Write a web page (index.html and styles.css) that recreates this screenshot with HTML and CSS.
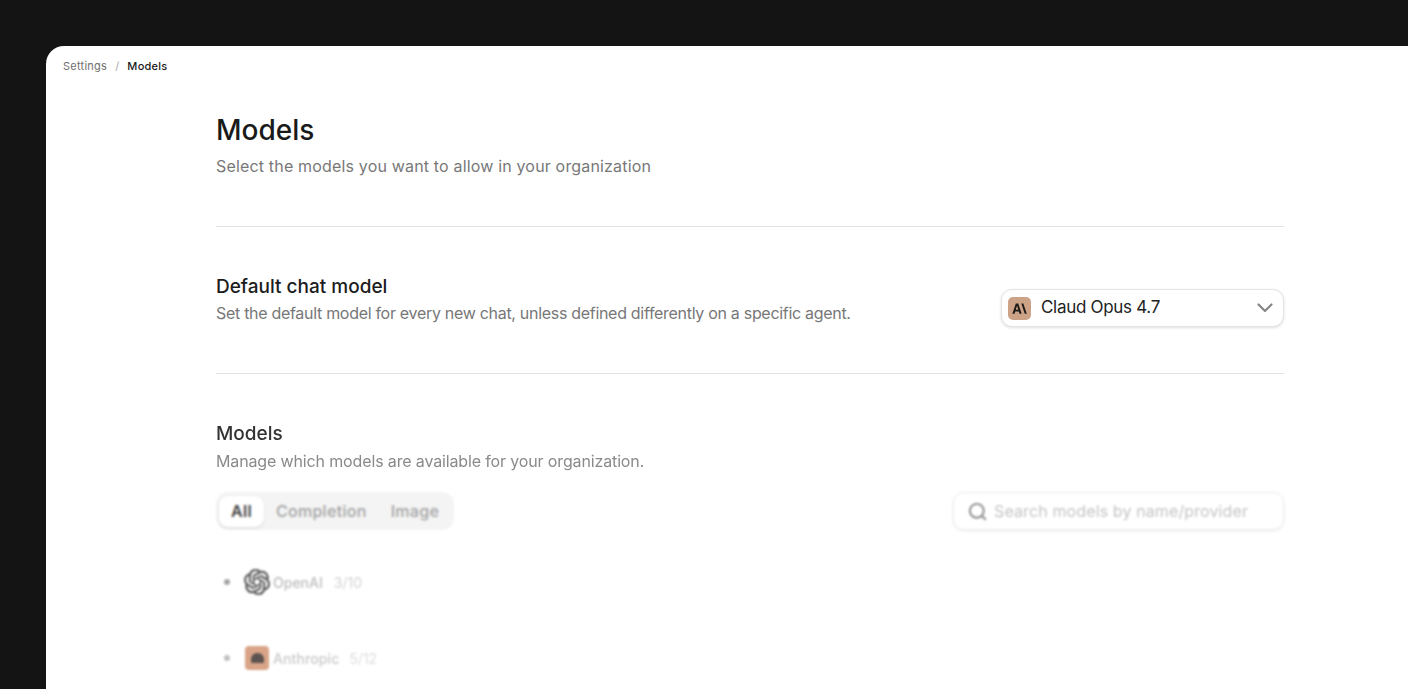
FILE: index.html
```html
<!DOCTYPE html>
<html lang="en">
<head>
<meta charset="utf-8">
<title>Models</title>
<link rel="stylesheet" href="styles.css">
</head>
<body>
<main class="panel">
  <nav class="crumbs"><span class="crumb">Settings</span><span class="sep">/</span><span class="crumb-current">Models</span></nav>
  <div class="content">
    <header class="page-head">
      <h1 class="page-title">Models</h1>
      <p class="page-sub">Select the models you want to allow in your organization</p>
    </header>
    <section class="default-row">
      <div class="default-text">
        <h2 class="section-title">Default chat model</h2>
        <p class="section-sub">Set the default model for every new chat, unless defined differently on a specific agent.</p>
      </div>
      <div class="select">
        <span class="logo-tile"><svg class="logo-a" viewBox="0 0 16 12"><path d="M0.2 11.6 4 0.6H6.6L10.4 11.6H8L7.3 9.3H3.3L2.6 11.6ZM3.9 7.4H6.7L5.3 3Z" fill="#1c1a18"/><path d="M10 0.6H12.2L15.9 11.6H13.7Z" fill="#1c1a18"/></svg></span>
        <span class="select-label">Claud Opus 4.7</span>
        <svg class="chev" viewBox="0 0 16 10"><path d="M1.5 1.5 8 8l6.5-6.5" fill="none" stroke="#868686" stroke-width="2.2" stroke-linecap="round" stroke-linejoin="round"/></svg>
      </div>
    </section>
    <section class="models">
      <div class="models-head">
        <h2 class="section-title models-title">Models</h2>
        <p class="section-sub models-sub">Manage which models are available for your organization.</p>
      </div>
      <div class="toolbar">
        <div class="tabs">
          <span class="tab tab-on">All</span>
          <span class="tab">Completion</span>
          <span class="tab">Image</span>
        </div>
        <div class="search">
          <svg class="search-ico" viewBox="0 0 20 20"><circle cx="9.3" cy="9.3" r="7.3" fill="none" stroke="#8a8a8a" stroke-width="2"/><path d="m14.6 14.6 3.6 3.6" stroke="#8a8a8a" stroke-width="2" stroke-linecap="round"/></svg>
          <span class="search-ph">Search models by name/provider</span>
        </div>
      </div>
      <ul class="providers">
        <li class="provider">
          <span class="caret"></span>
          <svg class="p-logo" viewBox="0 0 24 24"><path fill="#555" stroke="#666" stroke-width="0.5" d="M22.2819 9.8211a5.9847 5.9847 0 0 0-.5157-4.9108 6.0462 6.0462 0 0 0-6.5098-2.9A6.0651 6.0651 0 0 0 4.9807 4.1818a5.9847 5.9847 0 0 0-3.9977 2.9 6.0462 6.0462 0 0 0 .7427 7.0966 5.98 5.98 0 0 0 .511 4.9107 6.051 6.051 0 0 0 6.5146 2.9001A5.9847 5.9847 0 0 0 13.2599 24a6.0557 6.0557 0 0 0 5.7718-4.2058 5.9894 5.9894 0 0 0 3.9977-2.9001 6.0557 6.0557 0 0 0-.7475-7.0729zm-9.022 12.6081a4.4755 4.4755 0 0 1-2.8764-1.0408l.1419-.0804 4.7783-2.7582a.7948.7948 0 0 0 .3927-.6813v-6.7369l2.02 1.1686a.071.071 0 0 1 .038.052v5.5826a4.504 4.504 0 0 1-4.4945 4.4944zm-9.6607-4.1254a4.4708 4.4708 0 0 1-.5346-3.0137l.142.0852 4.783 2.7582a.7712.7712 0 0 0 .7806 0l5.8428-3.3685v2.3324a.0804.0804 0 0 1-.0332.0615L9.74 19.9502a4.4992 4.4992 0 0 1-6.1408-1.6464zM2.3408 7.8956a4.485 4.485 0 0 1 2.3655-1.9728V11.6a.7664.7664 0 0 0 .3879.6765l5.8144 3.3543-2.0201 1.1685a.0757.0757 0 0 1-.071 0l-4.8303-2.7865A4.504 4.504 0 0 1 2.3408 7.872zm16.5963 3.8558L13.1038 8.364 15.1192 7.2a.0757.0757 0 0 1 .071 0l4.8303 2.7913a4.4944 4.4944 0 0 1-.6765 8.1042v-5.6772a.79.79 0 0 0-.407-.667zm2.0107-3.0231l-.142-.0852-4.7735-2.7818a.7759.7759 0 0 0-.7854 0L9.409 9.2297V6.8974a.0662.0662 0 0 1 .0284-.0615l4.8303-2.7866a4.4992 4.4992 0 0 1 6.6802 4.66zM8.3065 12.863l-2.02-1.1638a.0804.0804 0 0 1-.038-.0567V6.0742a4.4992 4.4992 0 0 1 7.3757-3.4537l-.142.0805L8.704 5.459a.7948.7948 0 0 0-.3927.6813zm1.0976-2.3654l2.602-1.4998 2.6069 1.4998v2.9994l-2.5974 1.5-2.6067-1.4997Z"/></svg>
          <span class="p-name">OpenAI</span><span class="p-count">3/10</span>
        </li>
        <li class="provider provider-faint">
          <span class="caret"></span>
          <span class="p-tile"><span class="p-tile-mark"></span></span>
          <span class="p-name">Anthropic</span><span class="p-count">5/12</span>
        </li>
      </ul>
    </section>
  </div>
</main>
</body>
</html>
```
FILE: styles.css
```css
* { box-sizing: border-box; }
html, body { margin: 0; height: 100%; overflow: hidden; }
body {
  background: #141414;
  padding: 46px 0 0 46px;
  font-family: Inter, "Liberation Sans", sans-serif;
  color: #171717;
}
.panel {
  background: #fff;
  height: 643px;
  border-top-left-radius: 18px;
  overflow: hidden;
}
.crumbs {
  display: flex;
  align-items: center;
  height: 39px;
  padding-left: 17px;
  font-size: 11px;
  letter-spacing: 0.25px;
}
.crumb { color: #6f6f6f; }
.sep { color: #a8a8a8; margin: 0 8px; }
.crumb-current { color: #1a1a1a; font-weight: 500; }
.content { width: 1068px; margin-left: 170px; }
.page-head {
  height: 142px;
  padding-top: 27px;
  border-bottom: 1px solid #e3e3e3;
}
.page-title {
  margin: 0;
  font-size: 28px;
  line-height: 36px;
  font-weight: 500;
  color: #1a1a1a;
}
.page-sub {
  margin: 8px 0 0;
  font-size: 16px;
  line-height: 20px;
  color: #787878;
  letter-spacing: 0.17px;
}
.default-row {
  display: flex;
  justify-content: space-between;
  align-items: flex-start;
  height: 147px;
  padding-top: 48px;
  border-bottom: 1px solid #e3e3e3;
}
.section-title {
  margin: 0;
  font-size: 19px;
  line-height: 24px;
  font-weight: 500;
  color: #1c1c1c;
}
.section-sub {
  margin: 4px 0 0;
  font-size: 16px;
  line-height: 20px;
  color: #777;
  letter-spacing: -0.3px;
}
.select {
  display: flex;
  align-items: center;
  width: 283px;
  height: 38px;
  margin-top: 14px;
  padding: 0 10px 0 6px;
  border-radius: 11px;
  border: 1px solid #e4e4e4;
  box-shadow: 0 1px 3px rgba(0,0,0,.13);
  background: #fff;
}
.logo-tile {
  display: flex;
  align-items: center;
  justify-content: center;
  width: 23px;
  height: 23px;
  border-radius: 5px;
  background: #cda388;
}
.logo-a { width: 15px; height: 11px; }
.select-label { margin-left: 10px; padding-bottom: 2px; font-size: 17px; color: #222; flex: 1; letter-spacing: -0.3px; }
.chev { width: 16px; height: 10px; }
.models { filter: blur(0.7px); padding-top: 48px; }
.models-title { color: #333; }
.models-sub { color: #8a8a8a; margin-top: 5px; letter-spacing: -0.14px; }
.toolbar {
  display: flex;
  justify-content: space-between;
  margin-top: 21px;
  filter: blur(0.8px);
}
.tabs {
  display: flex;
  align-items: center;
  height: 38px;
  padding: 0 3px;
  border-radius: 12px;
  background: #f4f4f4;
}
.tab { padding: 0 12px; font-size: 16px; font-weight: 500; color: #a3a3a3; letter-spacing: 0.3px; }
.tab-on {
  display: flex;
  align-items: center;
  height: 31px;
  border-radius: 9px;
  background: #fff;
  color: #444;
  font-weight: 600;
  box-shadow: 0 1px 3px rgba(0,0,0,.12);
}
.search {
  display: flex;
  align-items: center;
  width: 331px;
  height: 38px;
  padding-left: 14px;
  border-radius: 11px;
  border: 1px solid #ececec;
  box-shadow: 0 1px 3px rgba(0,0,0,.09);
}
.search-ico { width: 19px; height: 19px; }
.search-ph { margin-left: 7px; font-size: 16px; color: #c4c4c4; letter-spacing: 0.12px; }
.providers { list-style: none; margin: 0; padding: 32px 0 0 8px; filter: blur(1.2px); }
.provider { display: flex; align-items: center; height: 40px; margin-bottom: 36px; }
.caret { width: 6px; height: 6px; border-radius: 50%; background: #a5a5a5; margin-right: 14px; }
.p-logo { width: 26px; height: 26px; }
.p-name { margin-left: 3px; font-size: 14px; font-weight: 500; color: #bdbdbd; }
.p-count { margin-left: 11px; font-size: 14px; color: #d2d2d2; }
.provider-faint { filter: blur(0.6px); }
.provider-faint .p-name { color: #c8c8c8; margin-left: 4px; letter-spacing: 0.1px; }
.provider-faint .p-count { color: #dcdcdc; margin-left: 10px; }
.provider-faint .caret { background: #c0c0c0; }
.p-tile {
  display: flex;
  align-items: center;
  justify-content: center;
  width: 24px;
  height: 24px;
  margin-left: 1px;
  border-radius: 4px;
  background: #d9a488;
}
.p-tile-mark { width: 13px; height: 10px; border-radius: 6px 6px 1px 1px; background: #5c5350; }
```
